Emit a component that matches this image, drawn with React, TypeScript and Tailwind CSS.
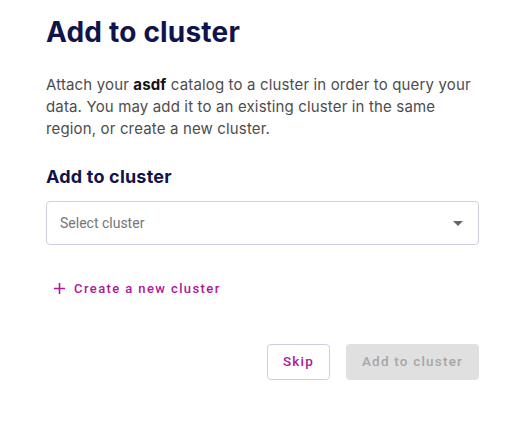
export default function App() {
  return (
    <div className="min-h-[429px] w-[526px] bg-white pl-[46px] pr-[47px] pt-[14px]">
      <h1
        className="text-[28px] leading-[36px] font-bold text-[#10144a] tracking-[0.2px]"
        style={{ fontFamily: "Inter, 'Open Sans', sans-serif" }}
      >
        Add to cluster
      </h1>
      <p
        className="mt-[24px] text-[15px] leading-[22px] text-[#4d4d4d] tracking-[0.15px]"
        style={{ fontFamily: "Inter, 'Noto Sans', sans-serif" }}
      >
        Attach your <span className="font-bold text-[#111]">asdf</span> catalog to a cluster in order to query your data. You may add it to an existing cluster in the same region, or create a new cluster.
      </p>
      <h2
        className="mt-[25px] text-[18px] leading-[24px] font-bold text-[#10144a] tracking-[0.2px]"
        style={{ fontFamily: "Inter, 'Open Sans', sans-serif" }}
      >
        Add to cluster
      </h2>
      <button className="mt-[12px] flex h-[44px] w-full items-center justify-between rounded-[4px] border border-[#cdd0e3] pl-[13px] pr-[15px]">
        <span
          className="text-[14px] text-[#767676]"
          style={{ fontFamily: "Roboto, sans-serif" }}
        >
          Select cluster
        </span>
        <svg width="10" height="5" viewBox="0 0 10 5">
          <path d="M0 0h10L5 5z" fill="#666" />
        </svg>
      </button>
      <div className="mt-[34px] flex items-center gap-[9px] pl-[8px] text-[#b0169a]">
        <svg width="11" height="11" viewBox="0 0 11 11">
          <path d="M5.5 0v11M0 5.5h11" stroke="#b0169a" strokeWidth="1.6" />
        </svg>
        <span
          className="text-[13px] font-medium tracking-[1.4px]"
          style={{ fontFamily: "Roboto, sans-serif" }}
        >
          Create a new cluster
        </span>
      </div>
      <div
        className="mt-[45px] flex justify-end gap-[16px]"
        style={{ fontFamily: "Roboto, sans-serif" }}
      >
        <button className="h-[36px] w-[63px] rounded-[4px] border border-[#cdd0e3] text-[13.5px] font-medium tracking-[1.2px] text-[#b0169a]">
          Skip
        </button>
        <button className="h-[36px] w-[133px] rounded-[4px] bg-[#e0e0e0] text-[13.5px] font-medium tracking-[1.2px] text-[#a6a6a6]">
          Add to cluster
        </button>
      </div>
    </div>
  );
}
